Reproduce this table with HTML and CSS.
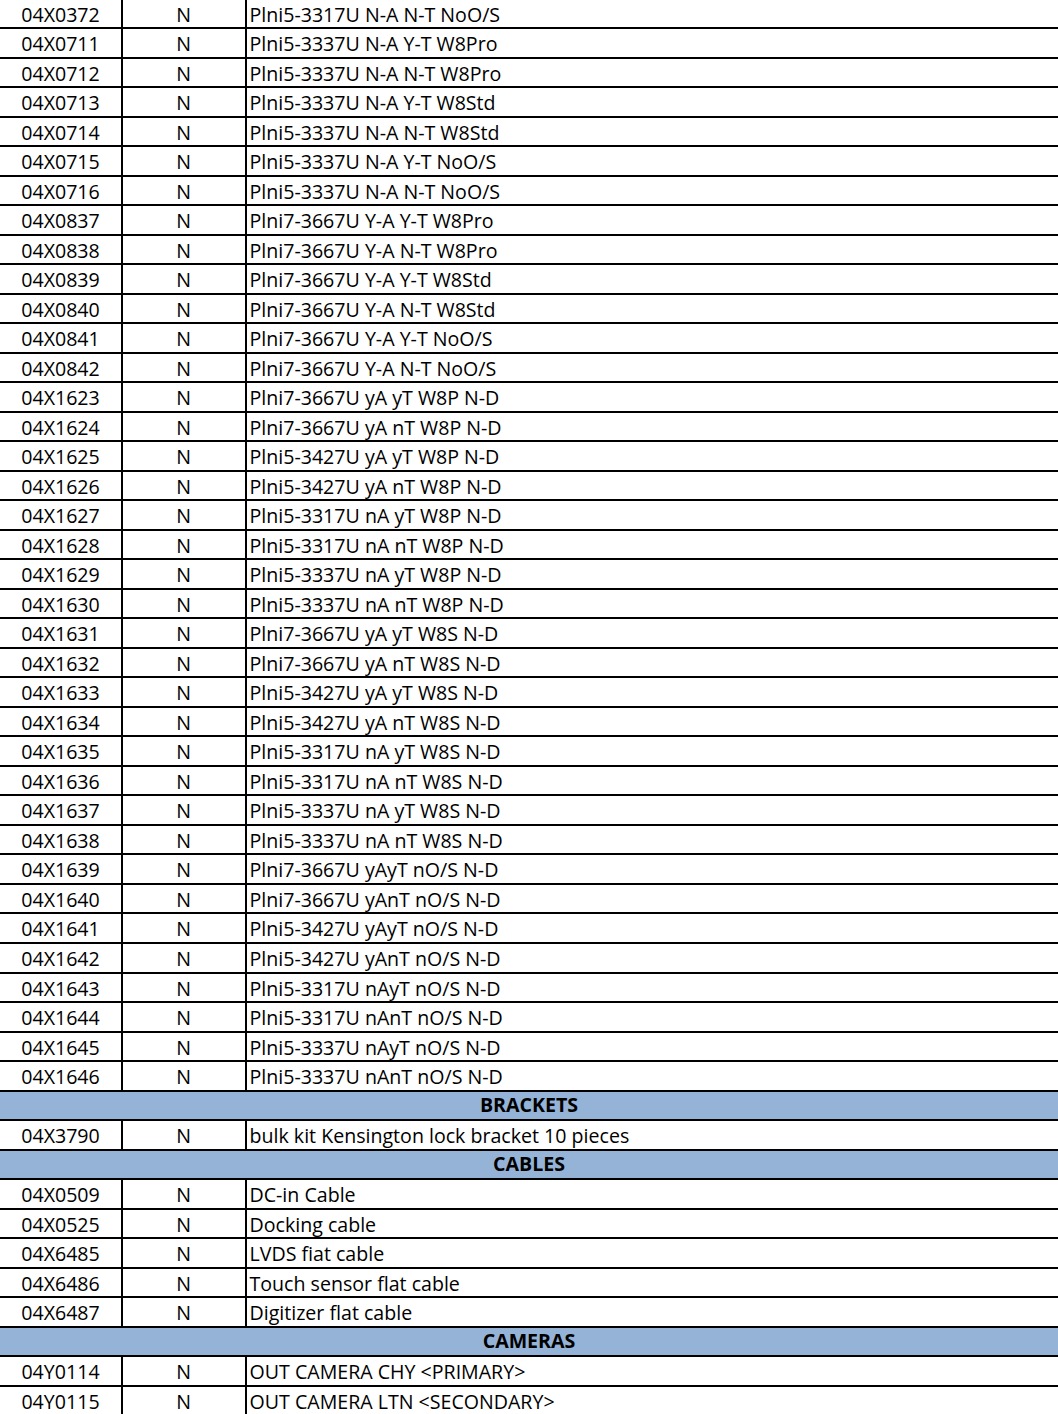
FILE: index.html
```html
<!DOCTYPE html>
<html lang="en">
<head>
<meta charset="utf-8">
<title>Parts list</title>
<link rel="stylesheet" href="styles.css">
</head>
<body>
<div class="sheet">
  <div class="row"><div class="cell code">04X0372</div><div class="cell flag">N</div><div class="cell desc">Plni5-3317U N-A N-T NoO/S</div></div>
  <div class="row"><div class="cell code">04X0711</div><div class="cell flag">N</div><div class="cell desc">Plni5-3337U N-A Y-T W8Pro</div></div>
  <div class="row"><div class="cell code">04X0712</div><div class="cell flag">N</div><div class="cell desc">Plni5-3337U N-A N-T W8Pro</div></div>
  <div class="row"><div class="cell code">04X0713</div><div class="cell flag">N</div><div class="cell desc">Plni5-3337U N-A Y-T W8Std</div></div>
  <div class="row"><div class="cell code">04X0714</div><div class="cell flag">N</div><div class="cell desc">Plni5-3337U N-A N-T W8Std</div></div>
  <div class="row"><div class="cell code">04X0715</div><div class="cell flag">N</div><div class="cell desc">Plni5-3337U N-A Y-T NoO/S</div></div>
  <div class="row"><div class="cell code">04X0716</div><div class="cell flag">N</div><div class="cell desc">Plni5-3337U N-A N-T NoO/S</div></div>
  <div class="row"><div class="cell code">04X0837</div><div class="cell flag">N</div><div class="cell desc">Plni7-3667U Y-A Y-T W8Pro</div></div>
  <div class="row"><div class="cell code">04X0838</div><div class="cell flag">N</div><div class="cell desc">Plni7-3667U Y-A N-T W8Pro</div></div>
  <div class="row"><div class="cell code">04X0839</div><div class="cell flag">N</div><div class="cell desc">Plni7-3667U Y-A Y-T W8Std</div></div>
  <div class="row"><div class="cell code">04X0840</div><div class="cell flag">N</div><div class="cell desc">Plni7-3667U Y-A N-T W8Std</div></div>
  <div class="row"><div class="cell code">04X0841</div><div class="cell flag">N</div><div class="cell desc">Plni7-3667U Y-A Y-T NoO/S</div></div>
  <div class="row"><div class="cell code">04X0842</div><div class="cell flag">N</div><div class="cell desc">Plni7-3667U Y-A N-T NoO/S</div></div>
  <div class="row"><div class="cell code">04X1623</div><div class="cell flag">N</div><div class="cell desc">Plni7-3667U yA yT W8P N-D</div></div>
  <div class="row"><div class="cell code">04X1624</div><div class="cell flag">N</div><div class="cell desc">Plni7-3667U yA nT W8P N-D</div></div>
  <div class="row"><div class="cell code">04X1625</div><div class="cell flag">N</div><div class="cell desc">Plni5-3427U yA yT W8P N-D</div></div>
  <div class="row"><div class="cell code">04X1626</div><div class="cell flag">N</div><div class="cell desc">Plni5-3427U yA nT W8P N-D</div></div>
  <div class="row"><div class="cell code">04X1627</div><div class="cell flag">N</div><div class="cell desc">Plni5-3317U nA yT W8P N-D</div></div>
  <div class="row"><div class="cell code">04X1628</div><div class="cell flag">N</div><div class="cell desc">Plni5-3317U nA nT W8P N-D</div></div>
  <div class="row"><div class="cell code">04X1629</div><div class="cell flag">N</div><div class="cell desc">Plni5-3337U nA yT W8P N-D</div></div>
  <div class="row"><div class="cell code">04X1630</div><div class="cell flag">N</div><div class="cell desc">Plni5-3337U nA nT W8P N-D</div></div>
  <div class="row"><div class="cell code">04X1631</div><div class="cell flag">N</div><div class="cell desc">Plni7-3667U yA yT W8S N-D</div></div>
  <div class="row"><div class="cell code">04X1632</div><div class="cell flag">N</div><div class="cell desc">Plni7-3667U yA nT W8S N-D</div></div>
  <div class="row"><div class="cell code">04X1633</div><div class="cell flag">N</div><div class="cell desc">Plni5-3427U yA yT W8S N-D</div></div>
  <div class="row"><div class="cell code">04X1634</div><div class="cell flag">N</div><div class="cell desc">Plni5-3427U yA nT W8S N-D</div></div>
  <div class="row"><div class="cell code">04X1635</div><div class="cell flag">N</div><div class="cell desc">Plni5-3317U nA yT W8S N-D</div></div>
  <div class="row"><div class="cell code">04X1636</div><div class="cell flag">N</div><div class="cell desc">Plni5-3317U nA nT W8S N-D</div></div>
  <div class="row"><div class="cell code">04X1637</div><div class="cell flag">N</div><div class="cell desc">Plni5-3337U nA yT W8S N-D</div></div>
  <div class="row"><div class="cell code">04X1638</div><div class="cell flag">N</div><div class="cell desc">Plni5-3337U nA nT W8S N-D</div></div>
  <div class="row"><div class="cell code">04X1639</div><div class="cell flag">N</div><div class="cell desc">Plni7-3667U yAyT nO/S N-D</div></div>
  <div class="row"><div class="cell code">04X1640</div><div class="cell flag">N</div><div class="cell desc">Plni7-3667U yAnT nO/S N-D</div></div>
  <div class="row"><div class="cell code">04X1641</div><div class="cell flag">N</div><div class="cell desc">Plni5-3427U yAyT nO/S N-D</div></div>
  <div class="row"><div class="cell code">04X1642</div><div class="cell flag">N</div><div class="cell desc">Plni5-3427U yAnT nO/S N-D</div></div>
  <div class="row"><div class="cell code">04X1643</div><div class="cell flag">N</div><div class="cell desc">Plni5-3317U nAyT nO/S N-D</div></div>
  <div class="row"><div class="cell code">04X1644</div><div class="cell flag">N</div><div class="cell desc">Plni5-3317U nAnT nO/S N-D</div></div>
  <div class="row"><div class="cell code">04X1645</div><div class="cell flag">N</div><div class="cell desc">Plni5-3337U nAyT nO/S N-D</div></div>
  <div class="row"><div class="cell code">04X1646</div><div class="cell flag">N</div><div class="cell desc">Plni5-3337U nAnT nO/S N-D</div></div>
  <div class="row section">BRACKETS</div>
  <div class="row"><div class="cell code">04X3790</div><div class="cell flag">N</div><div class="cell desc">bulk kit Kensington lock bracket 10 pieces</div></div>
  <div class="row section">CABLES</div>
  <div class="row"><div class="cell code">04X0509</div><div class="cell flag">N</div><div class="cell desc">DC-in Cable</div></div>
  <div class="row"><div class="cell code">04X0525</div><div class="cell flag">N</div><div class="cell desc">Docking cable</div></div>
  <div class="row"><div class="cell code">04X6485</div><div class="cell flag">N</div><div class="cell desc">LVDS fiat cable</div></div>
  <div class="row"><div class="cell code">04X6486</div><div class="cell flag">N</div><div class="cell desc">Touch sensor flat cable</div></div>
  <div class="row"><div class="cell code">04X6487</div><div class="cell flag">N</div><div class="cell desc">Digitizer flat cable</div></div>
  <div class="row section">CAMERAS</div>
  <div class="row"><div class="cell code">04Y0114</div><div class="cell flag">N</div><div class="cell desc">OUT CAMERA CHY &lt;PRIMARY&gt;</div></div>
  <div class="row"><div class="cell code">04Y0115</div><div class="cell flag">N</div><div class="cell desc">OUT CAMERA LTN &lt;SECONDARY&gt;</div></div>
</div>
</body>
</html>
```
FILE: styles.css
```css
html, body {
  margin: 0;
  padding: 0;
  background: #ffffff;
}

body {
  font-family: "Open Sans", "Liberation Sans", sans-serif;
  font-size: 19.6px;
  color: #000000;
  overflow: hidden;
}

.sheet {
  display: flex;
  flex-direction: column;
  margin-top: -0.5px;
}

.row {
  display: grid;
  grid-template-columns: 123px 123.5px 1fr;
  height: 29.52px;
  box-sizing: border-box;
  border-bottom: 2px solid #000000;
  flex: none;
}

.cell {
  box-sizing: border-box;
  line-height: 24px;
  padding-top: 3px;
  white-space: nowrap;
  overflow: hidden;
}

.code,
.flag {
  border-right: 2px solid #000000;
  text-align: center;
}

.desc {
  padding-left: 3px;
}

.section {
  display: block;
  background: #95b3d7;
  text-align: center;
  font-weight: 700;
  line-height: 24px;
  padding-top: 1px;
  border-top: 2px solid #000000;
  margin-top: -2px;
  height: 31.52px;
}
```
